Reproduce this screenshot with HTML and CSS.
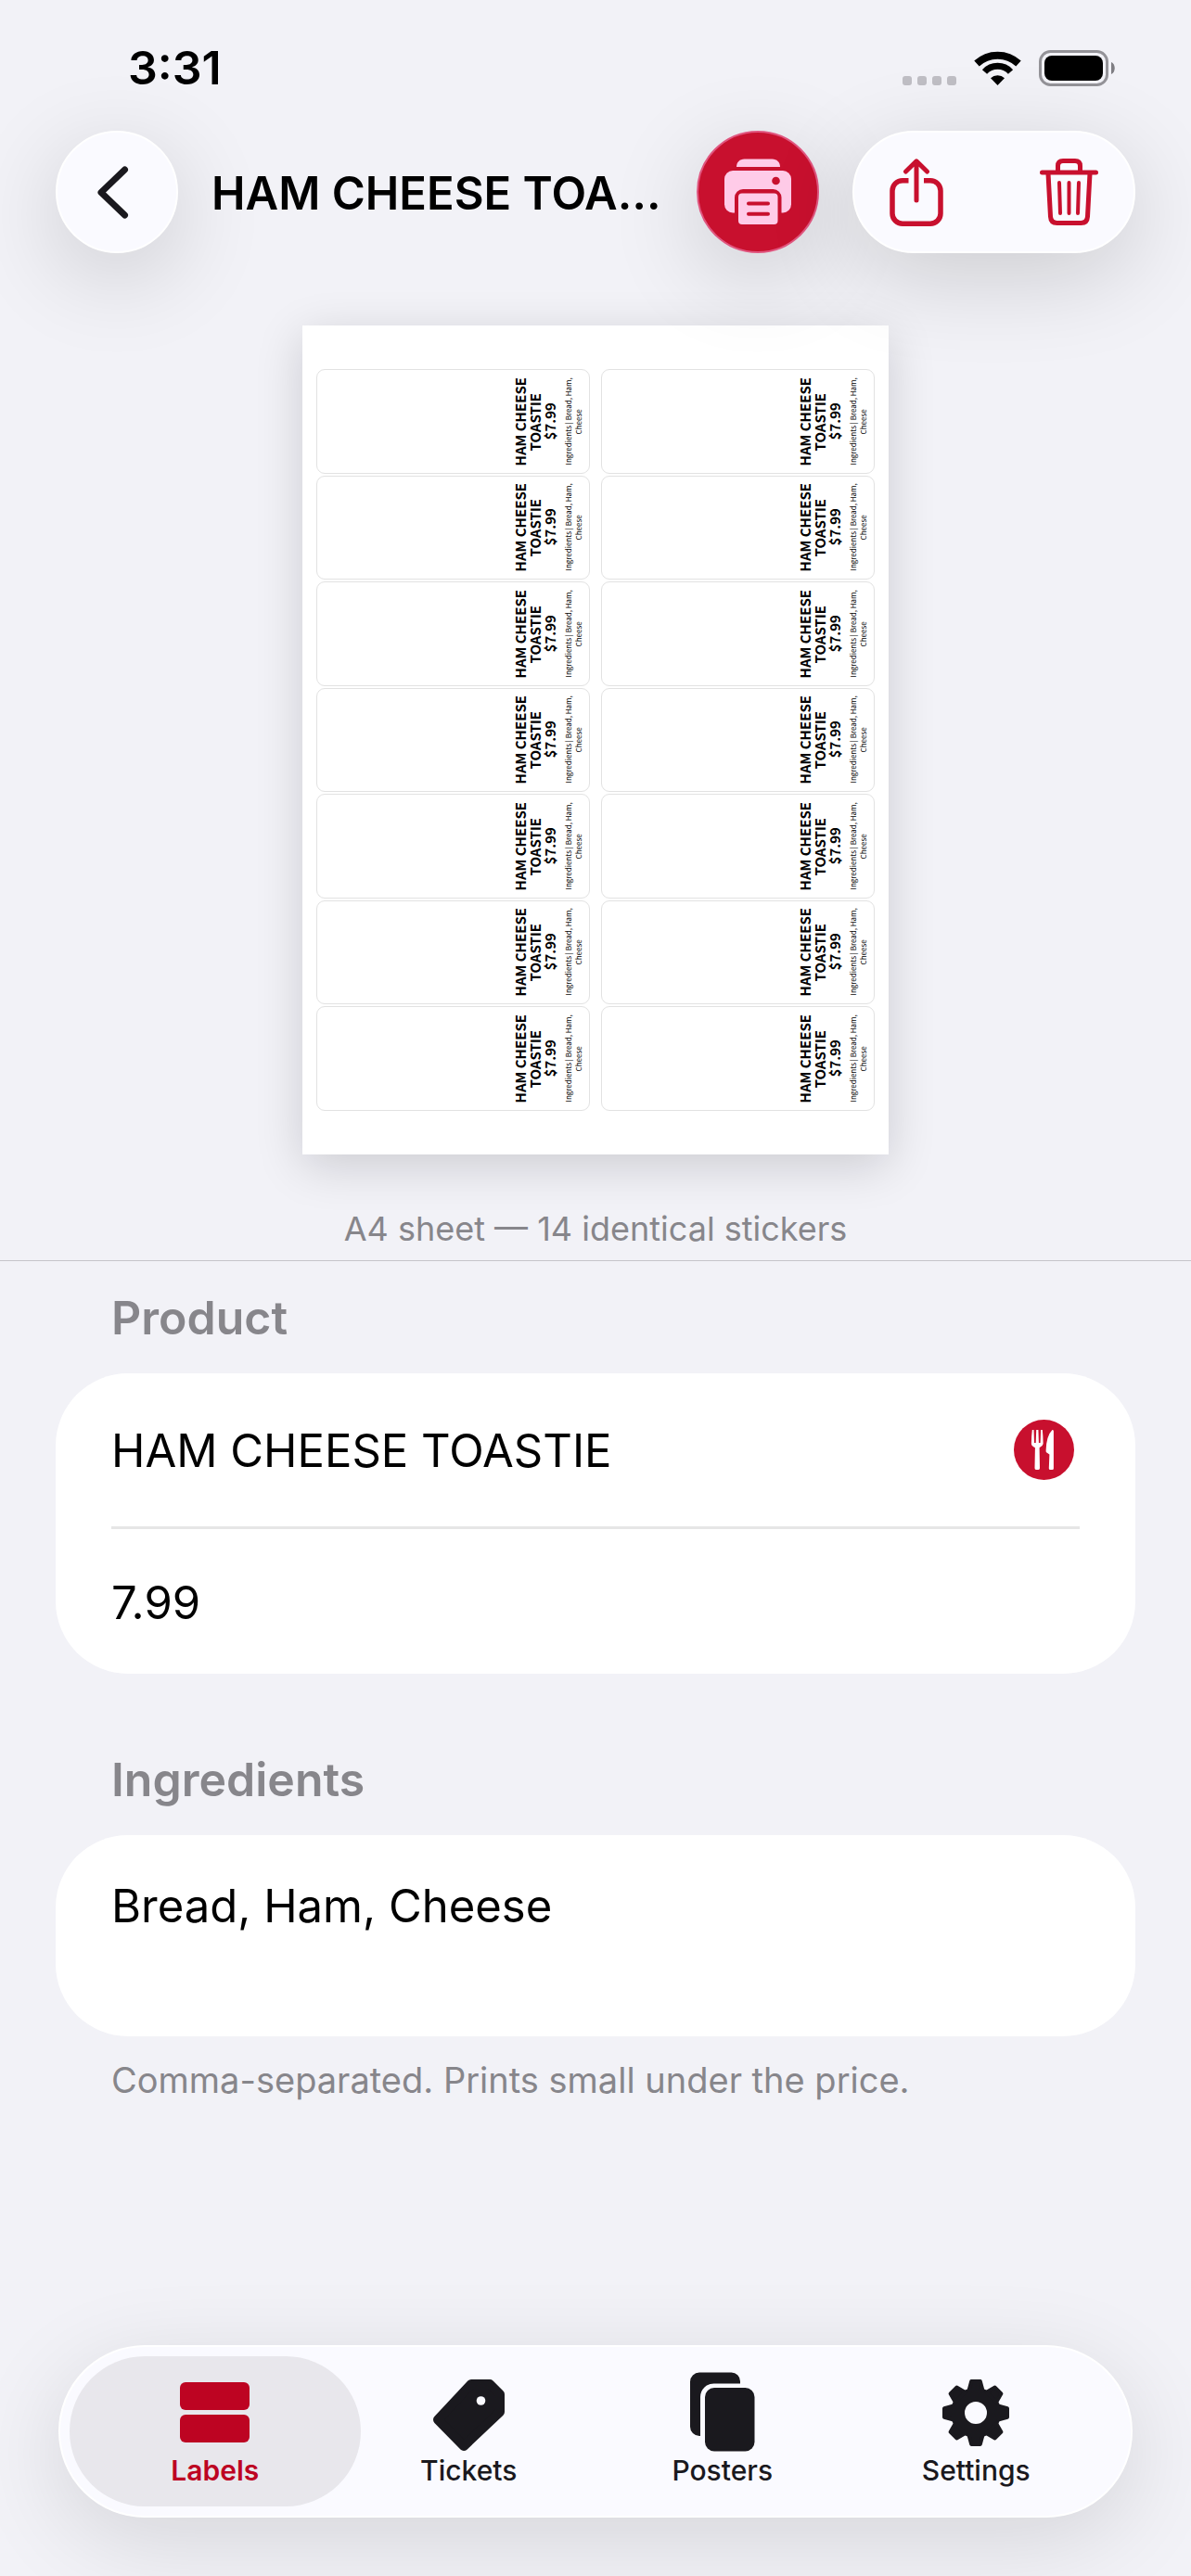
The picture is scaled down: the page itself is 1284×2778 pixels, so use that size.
FILE: index.html
```html
<!DOCTYPE html>
<html lang="en">
<head>
    <meta charset="UTF-8">
    <meta name="viewport" content="width=device-width, initial-scale=1.0">
    <title>Ham Cheese Toastie</title>
    <link rel="stylesheet" href="styles.css">
</head>
<body>
    <header class="top">
        <div class="status-bar">
            <span class="time">3:31</span>
            <div class="status-icons">
                <svg width="58" height="39" viewBox="0 0 58 39" fill="#bfbec4">
                    <rect x="0" y="28" width="10" height="10" rx="3"/>
                    <rect x="16" y="28" width="10" height="10" rx="3"/>
                    <rect x="32" y="28" width="10" height="10" rx="3"/>
                    <rect x="48" y="28" width="10" height="10" rx="3"/>
                </svg>
                <svg width="51" height="37" viewBox="0 0 51 37" fill="none" stroke="#000">
                    <path d="M3 13.5A33 33 0 0 1 48 13.5" stroke-width="8"/>
                    <path d="M11.5 22.5A19 19 0 0 1 39.5 22.5" stroke-width="7"/>
                    <path d="M25.5 37 18 29.3A11 11 0 0 1 33 29.3z" fill="#000" stroke="none"/>
                </svg>
                <svg width="82" height="39" viewBox="0 0 82 39">
                    <rect x="1.5" y="1.5" width="72" height="36" rx="11" fill="none" stroke="#949398" stroke-width="3"/>
                    <rect x="6" y="6" width="63" height="27" rx="8"/>
                    <path d="M78 13c5 2 5 11 0 13z" fill="#7f7e83"/>
                </svg>
            </div>
        </div>
        <div class="nav-bar">
            <button class="round-button" aria-label="Back">
                <svg width="42" height="57" viewBox="0 0 42 57" fill="none" stroke="#1a191e" stroke-width="7" stroke-linecap="round" stroke-linejoin="round">
                    <path d="M29.5 4 4 28.5 29.5 53"/>
                </svg>
            </button>
            <h1 title="HAM CHEESE TOASTIE">HAM CHEESE TOA…</h1>
            <button class="round-button print-button" aria-label="Print">
                <svg width="72" height="72" viewBox="0 0 72 72">
                    <path d="M13 9C13 4 16.5 .5 21.5 .5h30C56.500 .5 60 4 60 9z" fill="#ffcbe8"/>
                    <rect y="13" width="72" height="45.5" rx="9" fill="#ffcbe8"/>
                    <path d="M11 60V42a9 9 0 0 1 9-9h32.500a9 9 0 0 1 9 9v18z" fill="#c8102e"/>
                    <rect x="15" y="37.5" width="42.5" height="33.5" rx="4" fill="#ffcbe8"/>
                    <path d="M26 48.5h21M26 59.7h21" stroke="#c8102e" stroke-width="4" stroke-linecap="round"/>
                    <circle cx="55.5" cy="24" r="4.3" fill="#c8102e"/>
                </svg>
            </button>
            <div class="button-group">
                <button aria-label="Share">
                    <svg width="58" height="73" viewBox="0 0 58 73" fill="none" stroke="#c8102e" stroke-width="5.5" stroke-linejoin="round">
                        <path d="M20.5 23.7H14a11 11 0 0 0-11 11v24.500a11 11 0 0 0 11 11h30a11 11 0 0 0 11-11V34.700a11 11 0 0 0-11-11h-7"/>
                        <path d="M29 45V4M17.5 14 29 2.8 40.5 14" stroke-width="5" stroke-linecap="round"/>
                    </svg>
                </button>
                <button aria-label="Delete">
                    <svg width="63" height="72" viewBox="0 0 63 72" fill="none" stroke="#c8102e" stroke-width="5" stroke-linecap="round">
                        <path d="M2.5 15h58M19.5 14V8q0-5.500 5.500-5.500h13q5.500 0 5.500 5.500v6"/>
                        <path d="M9 16l2.500 46.500q.4 7 7 7h26q6.600 0 7-7L54 16"/>
                        <path d="M21 26l1 33M31.500 26v33M42 26l-1 33" stroke-width="4"/>
                    </svg>
                </button>
            </div>
        </div>
    </header>

    <main>
        <section class="preview">
            <div class="sheet" id="sheet"></div>
            <p class="caption">A4 sheet — 14 identical stickers</p>
        </section>

        <form class="form">
            <h2><label for="name">Product</label></h2>
            <div class="card">
                <div class="row">
                    <input type="text" id="name" value="HAM CHEESE TOASTIE">
                    <button type="button" class="icon-button" aria-label="Choose food icon">
                        <svg width="65" height="65" viewBox="0 0 65 65">
                            <circle cx="32.5" cy="32.5" r="32.5" fill="#c8102e"/>
                            <path d="M19.800 11h1.700l.5 14h1.700l.5-14h2.200l.5 14h1.700l.5-14h1.700q.8 7 .8 15-.3 2.500-4 4.300l.4 22q0 1.700-1.500 1.700h-2.500q-1.500 0-1.500-1.700l.4-22Q19 28.500 18.900 26q0-8 .9-15z" fill="#fff"/>
                            <path d="M41.500 11q1.400-.3 1.400 1.500v40q0 1.500-1.500 1.500h-2q-1.600 0-1.600-1.500l.6-15-3.300-2.300q-.6-.4-.5-2 .5-16 6.900-22.200z" fill="#fff"/>
                        </svg>
                    </button>
                </div>
                <div class="row">
                    <input type="text" id="price" inputmode="decimal" aria-label="Price" value="7.99">
                </div>
            </div>

            <h2><label for="ingredients">Ingredients</label></h2>
            <div class="card">
                <textarea id="ingredients">Bread, Ham, Cheese</textarea>
            </div>
            <p class="hint">Comma-separated. Prints small under the price.</p>
        </form>
    </main>

    <nav class="tab-bar">
        <a href="#labels" class="tab active" aria-current="page">
            <svg width="75" height="86" viewBox="0 0 75 86" fill="currentColor">
                <rect y="11" width="75" height="30" rx="6"/>
                <rect y="46" width="75" height="30" rx="6"/>
            </svg>
            <span>Labels</span>
        </a>
        <a href="#tickets" class="tab">
            <svg width="77" height="86" viewBox="0 -8 77 86">
                <path d="M41 5h20l11 11v19L33 72 5 43.500z" fill="currentColor" stroke="currentColor" stroke-width="10" stroke-linejoin="round"/>
                <circle cx="51.5" cy="23" r="4.8" fill="#fafaff"/>
            </svg>
            <span>Tickets</span>
        </a>
        <a href="#posters" class="tab">
            <svg width="70" height="86" viewBox="0 0 70 86" fill="currentColor">
                <path d="M54 12.500V10A9.500 9.500 0 0 0 44.500 .5H10a10 10 0 0 0-10 10V59a10 10 0 0 0 10 10h1V27a14.500 14.500 0 0 1 14.500-14.500z"/>
                <rect x="16" y="17" width="53.5" height="68.5" rx="10"/>
            </svg>
            <span>Posters</span>
        </a>
        <a href="#settings" class="tab">
            <svg width="74" height="86" viewBox="-37 -44 74 86" fill="currentColor" stroke="currentColor">
                <circle r="19.5" fill="none" stroke-width="15"/>
                <g stroke-width="4" stroke-linejoin="round">
                    <path id="tooth" d="M-7.500-24-4.800-34H4.800L7.500-24z"/>
                    <use href="#tooth" transform="rotate(45)"/>
                    <use href="#tooth" transform="rotate(90)"/>
                    <use href="#tooth" transform="rotate(135)"/>
                    <use href="#tooth" transform="rotate(180)"/>
                    <use href="#tooth" transform="rotate(225)"/>
                    <use href="#tooth" transform="rotate(270)"/>
                    <use href="#tooth" transform="rotate(315)"/>
                </g>
            </svg>
            <span>Settings</span>
        </a>
    </nav>

    <script src="script.js"></script>
</body>
</html>
```
FILE: styles.css
```css
* {box-sizing: border-box;}
body {
    margin: 0;
    min-height: 100vh;
    display: flex;
    flex-direction: column;
    background: #f2f2f7;
    color: #000;
    font-family: Inter, "Liberation Sans", sans-serif;
    font-size: 49px;
    line-height: 62px;
}
h1, h2, p {margin: 0;}
svg {display: block; flex: none;}
button {
    padding: 0;
    border: none;
    background: none;
    cursor: pointer;
}

/* status bar and navigation */
.top {position: relative; z-index: 1;}
.status-bar {
    display: flex;
    justify-content: space-between;
    align-items: center;
    padding: 42px 82px 37px 138px;
}
.time {font-size: 50px; font-weight: 600;}
.status-icons {display: flex; align-items: center; gap: 19px;}
.nav-bar {
    display: flex;
    align-items: center;
    gap: 36px;
    padding: 0 60px;
}
.nav-bar h1 {
    flex: 1;
    min-width: 0;
    padding-top: 3px;
    font-size: 49px;
    font-weight: 600;
    white-space: nowrap;
}
.round-button, .button-group {
    display: flex;
    align-items: center;
    justify-content: center;
    flex: none;
    height: 132px;
    border: 2px solid #fff;
    border-radius: 66px;
    background: #fafaff;
    box-shadow: 0 24px 100px rgba(0, 0, 0, 0.16);
}
.round-button {width: 132px;}
.print-button {background: #c8102e; border-color: #e0567f;}
.button-group {gap: 104px; padding: 0 38px;}

/* sheet preview */
.preview {
    padding: 78px 60px 10px;
    border-bottom: 1px solid #c6c5ca;
    text-align: center;
}
.sheet {
    display: grid;
    grid-template-columns: 1fr 1fr;
    grid-auto-rows: 1fr;
    gap: 2px 12px;
    width: 632px;
    max-width: 100%;
    aspect-ratio: 210 / 297;
    margin: 0 auto;
    padding: 47px 15px;
    background: #fff;
    box-shadow: 0 12px 48px rgba(0, 0, 20, 0.16);
}
.sticker {
    display: flex;
    align-items: center;
    justify-content: flex-end;
    padding-right: 6px;
    border: 1px solid #e2e2e2;
    border-radius: 9px;
}
.sticker-text {
    writing-mode: vertical-rl;
    transform: rotate(180deg);
    font-family: "Noto Sans CJK SC", sans-serif;
    font-size: 8px;
    line-height: 11px;
    text-align: center;
}
.sticker-text strong {
    display: block;
    font-size: 15px;
    line-height: 16px;
}
.sticker-text .small {display: block; margin-right: 6px;}
.caption {
    margin-top: 56px;
    color: #87868b;
    font-size: 36px;
    line-height: 48px;
}

/* form */
.form {padding: 30px 60px;}
.form h2 {
    margin-bottom: 29px;
    padding: 0 60px;
    color: #87868b;
    font-size: 50px;
    font-weight: 600;
}
.card {
    padding: 0 60px;
    border-radius: 78px;
    background: #fff;
}
.card + h2 {margin-top: 83px;}
.row {
    display: flex;
    align-items: center;
    height: 156px;
}
.row:first-child {
    height: 168px;
    border-bottom: 3px solid #e6e6e6;
}
input, textarea {
    flex: 1;
    min-width: 0;
    padding: 4px 0 0;
    border: none;
    outline: none;
    background: none;
    color: #000;
    font: inherit;
}
textarea {
    display: block;
    width: 100%;
    height: 217px;
    padding: 46px 0 45px;
    resize: none;
}
.icon-button {margin-right: 6px;}
.hint {
    margin-top: 23px;
    padding: 0 60px;
    color: #87868b;
    font-size: 38px;
    line-height: 48px;
}

/* tab bar */
.tab-bar {
    display: flex;
    height: 186px;
    margin: auto 63px 63px;
    padding: 10px;
    border: 2px solid #fff;
    border-radius: 93px;
    background: #fafaff;
    box-shadow: 0 24px 100px rgba(0, 0, 0, 0.12);
}
.tab {
    flex: 1;
    display: flex;
    flex-direction: column;
    align-items: center;
    padding-top: 17px;
    border-radius: 81px;
    color: #1a191e;
    font-size: 30px;
    font-weight: 500;
    line-height: 40px;
    text-decoration: none;
}
.tab + .tab {margin-left: -40px;}
.tab.active {background: #e8e7ec; color: #bd0422; font-weight: 600;}
```
FILE: script.js
```javascript
const sheet = document.getElementById("sheet");
const stickerCount = 14;

for (let i = 0; i < stickerCount; i++) {
    const sticker = document.createElement("div");
    sticker.className = "sticker";
    sticker.innerHTML = `
        <div class="sticker-text">
            <strong>HAM CHEESE<br>TOASTIE<br>$7.99</strong>
            <span class="small">Ingredients | Bread, Ham,<br>Cheese</span>
        </div>`;
    sheet.appendChild(sticker);
}
```
